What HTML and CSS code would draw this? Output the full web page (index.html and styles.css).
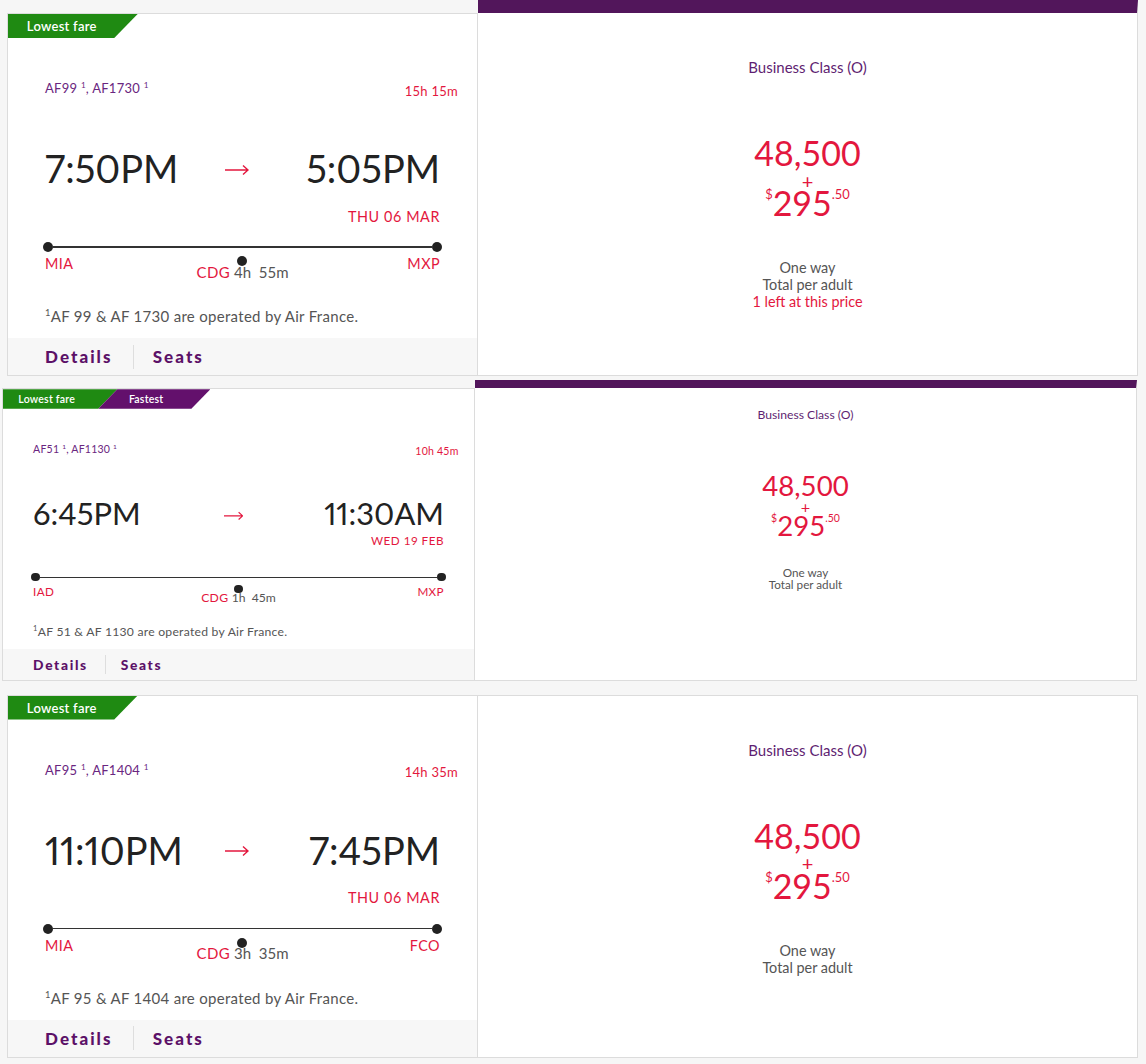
FILE: index.html
```html
<!DOCTYPE html>
<html lang="en">
<head>
    <meta charset="UTF-8">
    <meta name="viewport" content="width=device-width, initial-scale=1.0">
    <title>Flight results</title>
    <link rel="stylesheet" href="styles.css">
</head>
<body>
    <div class="results">

        <!-- MIA to MXP -->
        <div class="fare-row fare-row--featured">
            <div class="flight">
                <div class="badges">
                    <span class="badge badge--lowest">Lowest fare</span>
                </div>
                <div class="flight-body">
                    <div class="flight-head">
                        <span class="flight-numbers">AF99 <sup>1</sup>, AF1730 <sup>1</sup></span>
                        <span class="duration">15h 15m</span>
                    </div>
                    <div class="times">
                        <span class="time">7:50PM</span>
                        <svg class="arrow" viewBox="0 0 24 12"><path d="M0 6H23M18 1.5L23 6L18 10.5"/></svg>
                        <span class="time time--arrive">5:05PM</span>
                    </div>
                    <div class="arrive-date">THU 06 MAR</div>
                    <div class="route-line"><span class="dot"></span><span class="track"></span><span class="dot"></span></div>
                    <div class="stops">
                        <span class="airport">MIA</span>
                        <span class="stop">
                            <span class="dot"></span>
                            <span class="stop-label"><span class="stop-code">CDG</span> 4h&nbsp; 55m</span>
                        </span>
                        <span class="airport">MXP</span>
                    </div>
                    <p class="operated"><sup>1</sup>AF 99 &amp; AF 1730 are operated by Air France.</p>
                </div>
                <div class="flight-links">
                    <a href="#">Details</a>
                    <span class="divider"></span>
                    <a href="#">Seats</a>
                </div>
            </div>
            <div class="fare">
                <div class="cabin">Business Class (O)</div>
                <div class="points">48,500</div>
                <div class="plus">+</div>
                <div class="cash"><sup>$</sup>295<sup>.50</sup></div>
                <div class="notes">
                    One way<br>
                    Total per adult<br>
                    <span class="alert">1 left at this price</span>
                </div>
            </div>
        </div>

        <!-- IAD to MXP -->
        <div class="fare-row fare-row--featured fare-row--compact">
            <div class="flight">
                <div class="badges">
                    <span class="badge badge--lowest">Lowest fare</span>
                    <span class="badge badge--fastest">Fastest</span>
                </div>
                <div class="flight-body">
                    <div class="flight-head">
                        <span class="flight-numbers">AF51 <sup>1</sup>, AF1130 <sup>1</sup></span>
                        <span class="duration">10h 45m</span>
                    </div>
                    <div class="times">
                        <span class="time">6:45PM</span>
                        <svg class="arrow" viewBox="0 0 24 12"><path d="M0 6H23M18 1.5L23 6L18 10.5"/></svg>
                        <span class="time time--arrive">11:30AM</span>
                    </div>
                    <div class="arrive-date">WED 19 FEB</div>
                    <div class="route-line"><span class="dot"></span><span class="track"></span><span class="dot"></span></div>
                    <div class="stops">
                        <span class="airport">IAD</span>
                        <span class="stop">
                            <span class="dot"></span>
                            <span class="stop-label"><span class="stop-code">CDG</span> 1h&nbsp; 45m</span>
                        </span>
                        <span class="airport">MXP</span>
                    </div>
                    <p class="operated"><sup>1</sup>AF 51 &amp; AF 1130 are operated by Air France.</p>
                </div>
                <div class="flight-links">
                    <a href="#">Details</a>
                    <span class="divider"></span>
                    <a href="#">Seats</a>
                </div>
            </div>
            <div class="fare">
                <div class="cabin">Business Class (O)</div>
                <div class="points">48,500</div>
                <div class="plus">+</div>
                <div class="cash"><sup>$</sup>295<sup>.50</sup></div>
                <div class="notes">
                    One way<br>
                    Total per adult
                </div>
            </div>
        </div>

        <!-- MIA to FCO -->
        <div class="fare-row fare-row--plain">
            <div class="flight">
                <div class="badges">
                    <span class="badge badge--lowest">Lowest fare</span>
                </div>
                <div class="flight-body">
                    <div class="flight-head">
                        <span class="flight-numbers">AF95 <sup>1</sup>, AF1404 <sup>1</sup></span>
                        <span class="duration">14h 35m</span>
                    </div>
                    <div class="times">
                        <span class="time">11:10PM</span>
                        <svg class="arrow" viewBox="0 0 24 12"><path d="M0 6H23M18 1.5L23 6L18 10.5"/></svg>
                        <span class="time time--arrive">7:45PM</span>
                    </div>
                    <div class="arrive-date">THU 06 MAR</div>
                    <div class="route-line"><span class="dot"></span><span class="track"></span><span class="dot"></span></div>
                    <div class="stops">
                        <span class="airport">MIA</span>
                        <span class="stop">
                            <span class="dot"></span>
                            <span class="stop-label"><span class="stop-code">CDG</span> 3h&nbsp; 35m</span>
                        </span>
                        <span class="airport">FCO</span>
                    </div>
                    <p class="operated"><sup>1</sup>AF 95 &amp; AF 1404 are operated by Air France.</p>
                </div>
                <div class="flight-links">
                    <a href="#">Details</a>
                    <span class="divider"></span>
                    <a href="#">Seats</a>
                </div>
            </div>
            <div class="fare">
                <div class="cabin">Business Class (O)</div>
                <div class="points">48,500</div>
                <div class="plus">+</div>
                <div class="cash"><sup>$</sup>295<sup>.50</sup></div>
                <div class="notes">
                    One way<br>
                    Total per adult
                </div>
            </div>
        </div>

    </div>
</body>
</html>
```

FILE: styles.css
```css
body {
    margin: 0;
    background-color: #f6f6f6;
    font-family: Lato, "Open Sans", "Liberation Sans", sans-serif;
    color: #222;
}
.results {
    padding: 0 8px 7px 7px;
}

/* one result: flight on the left, fare on the right */
.fare-row {
    display: flex;
    font-size: 16px;
    margin-top: 4px;
}
.fare-row:first-child {
    margin-top: 0;
}
.fare-row--plain {
    margin-top: 14px;
}
.flight {
    flex: 0 0 471px;
    box-sizing: border-box;
    display: flex;
    flex-direction: column;
    background-color: #fff;
    border: 1px solid #dcdcdc;
}
.fare {
    flex: 1;
    background-color: #fff;
    border: 1px solid #dcdcdc;
    border-left: none;
    text-align: center;
    padding-top: 2.875em;
}
.fare-row--featured .flight {
    margin-top: 13px;
}
.fare-row--featured .fare {
    border-top: 13px solid #52165b;
}

/* tags */
.badges {
    display: flex;
    height: 1.5em;
}
.badge {
    display: flex;
    align-items: center;
    color: #fff;
    font-size: 0.8125em;
    font-weight: 600;
    letter-spacing: 0.02em;
    padding: 0 3.15em 0 1.45em;
    clip-path: polygon(0 0, 100% 0, calc(100% - 1.8em) 100%, 0 100%);
}
.badge--lowest {
    background-color: #1f8a12;
}
.badge--fastest {
    background-color: #63106c;
    margin-left: -1.8em;
    padding: 0 4.45em 0 2.9em;
    clip-path: polygon(1.8em 0, 100% 0, calc(100% - 1.8em) 100%, 0 100%);
}

.flight-body {
    padding: 0 2.3125em 0.75em;
}
.flight-head {
    display: flex;
    justify-content: space-between;
    align-items: flex-end;
    margin: 2.625em -1.125em 0 0;
}
.flight-numbers,
.duration {
    font-size: 0.8125em;
    line-height: 1.25;
    letter-spacing: 0.02em;
}
.flight-numbers {
    color: #6a2680;
}
.duration {
    color: #e3173e;
    position: relative;
    top: 0.2em;
}
sup {
    font-size: 0.62em;
    line-height: 0;
    vertical-align: 0.6em;
}

.times {
    display: grid;
    grid-template-columns: 1fr auto 1fr;
    align-items: center;
    margin-top: 3.3em;
}
.time {
    font-size: 2.375em;
    line-height: 1;
    color: #222;
    font-variant-numeric: proportional-nums;
}
.time--arrive {
    justify-self: end;
}
.arrow {
    width: 1.5em;
    height: 0.75em;
    margin: 0.2em 0.75em 0 0;
    fill: none;
    stroke: #e3173e;
    stroke-width: 1.4;
}
.arrive-date {
    text-align: right;
    color: #e3173e;
    font-size: 0.9em;
    line-height: 1.15;
    letter-spacing: 0.04em;
    margin-top: 1.5em;
}

/* route timeline */
.route-line {
    display: flex;
    align-items: center;
    margin: 1.0625em -0.125em 0;
}
.dot {
    flex: none;
    width: 0.625em;
    height: 0.625em;
    border-radius: 50%;
    background-color: #222;
}
.track {
    flex: 1;
    height: 1.5px;
    background-color: #333;
}
.stops {
    display: grid;
    grid-template-columns: 1fr auto 1fr;
    align-items: start;
    margin-top: 0.25em;
}
.airport {
    color: #e3173e;
    font-size: 0.9em;
    line-height: 1.15;
    letter-spacing: 0.03em;
}
.stops .airport:last-child {
    justify-self: end;
}
.stop {
    display: flex;
    flex-direction: column;
    align-items: center;
}
.stop-label {
    font-size: 0.9375em;
    line-height: 1.15;
    color: #555;
    margin-top: -0.15em;
    white-space: nowrap;
}
.stop-code {
    color: #e3173e;
    letter-spacing: 0.03em;
}
.operated {
    margin: 1.75em 0 0;
    font-size: 0.9375em;
    line-height: 1.25;
    letter-spacing: 0.02em;
    color: #555;
}

.flight-links {
    display: flex;
    align-items: center;
    height: 2.3125em;
    padding: 0 2.3125em;
    background-color: #f7f7f7;
}
.flight-links a {
    color: #5c1168;
    font-size: 1.0625em;
    font-weight: 900;
    letter-spacing: 0.12em;
    text-decoration: none;
}
.divider {
    align-self: stretch;
    width: 1px;
    margin: 0.4em 1.15em 0.4em 1.3em;
    background-color: #dedede;
}

/* fare column */
.cabin {
    font-size: 0.9375em;
    line-height: 1.1;
    color: #5f1f72;
}
.points,
.cash {
    font-size: 2.125em;
    line-height: 0.85;
    color: #e3173e;
}
.points {
    margin-top: 1.875em;
}
.plus {
    font-size: 1.25em;
    line-height: 0.6;
    margin-top: 0.33em;
    color: #e3173e;
}
.cash {
    margin-top: 0.07em;
}
.cash sup {
    font-size: 0.38em;
    vertical-align: 1.3em;
}
.notes {
    margin-top: 2.85em;
    font-size: 0.9em;
    line-height: 1.18;
    color: #555;
}
.alert {
    color: #e3173e;
}

/* smaller listing */
.fare-row--compact {
    font-size: 13px;
    margin-left: -5px;
    margin-right: 1px;
}
.fare-row--compact .flight {
    flex-basis: 473px;
}
.fare-row--featured.fare-row--compact .flight {
    margin-top: 8px;
}
.fare-row--featured.fare-row--compact .fare {
    border-top-width: 8px;
}
.fare-row--compact .badge--lowest {
    padding-right: 4em;
}
.fare-row--compact .arrive-date {
    margin-top: 0.4em;
}
.fare-row--compact .route-line {
    margin-top: 1.95em;
}
.fare-row--compact .operated {
    margin-top: 1.6em;
}
.fare-row--compact .fare {
    padding-top: 1.55em;
}
.fare-row--compact .notes {
    margin-top: 2.4em;
    line-height: 1.05;
}
```
